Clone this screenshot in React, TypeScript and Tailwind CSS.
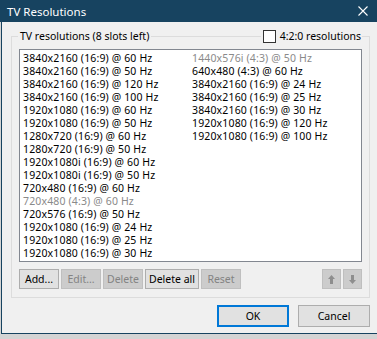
import React from "react";

type Item = { label: string; dim?: boolean };

const items: Item[] = [
  { label: "3840x2160 (16:9) @ 60 Hz" },
  { label: "3840x2160 (16:9) @ 50 Hz" },
  { label: "3840x2160 (16:9) @ 120 Hz" },
  { label: "3840x2160 (16:9) @ 100 Hz" },
  { label: "1920x1080 (16:9) @ 60 Hz" },
  { label: "1920x1080 (16:9) @ 50 Hz" },
  { label: "1280x720 (16:9) @ 60 Hz" },
  { label: "1280x720 (16:9) @ 50 Hz" },
  { label: "1920x1080i (16:9) @ 60 Hz" },
  { label: "1920x1080i (16:9) @ 50 Hz" },
  { label: "720x480 (16:9) @ 60 Hz" },
  { label: "720x480 (4:3) @ 60 Hz", dim: true },
  { label: "720x576 (16:9) @ 50 Hz" },
  { label: "1920x1080 (16:9) @ 24 Hz" },
  { label: "1920x1080 (16:9) @ 25 Hz" },
  { label: "1920x1080 (16:9) @ 30 Hz" },
  // second column
  { label: "1440x576i (4:3) @ 50 Hz", dim: true },
  { label: "640x480 (4:3) @ 60 Hz" },
  { label: "3840x2160 (16:9) @ 24 Hz" },
  { label: "3840x2160 (16:9) @ 25 Hz" },
  { label: "3840x2160 (16:9) @ 30 Hz" },
  { label: "1920x1080 (16:9) @ 120 Hz" },
  { label: "1920x1080 (16:9) @ 100 Hz" },
];

const Btn: React.FC<{ label?: string; disabled?: boolean; className?: string; children?: React.ReactNode }> = ({
  label,
  disabled,
  className = "",
  children,
}) => (
  <div
    className={`h-[20px] flex items-center justify-center border ${
      disabled ? "bg-[#cccccc] border-[#bfbfbf] text-[#838383]" : "bg-[#e1e1e1] border-[#adadad] text-black"
    } ${className}`}
  >
    {label}
    {children}
  </div>
);

const Arrow: React.FC<{ down?: boolean }> = ({ down }) => (
  <svg width="7" height="9" viewBox="0 0 7 9" className={down ? "rotate-180" : ""}>
    <path d="M3.5 0 L7 4 L5 4 L5 9 L2 9 L2 4 L0 4 Z" fill="#8e8e8e" />
  </svg>
);

export default function App() {
  return (
    <div
      className="w-[377px] h-[339px] bg-[#d4d4d4] overflow-hidden text-[10.5px] leading-[13px] text-black"
      style={{ fontFamily: '"Segoe UI", "Noto Sans", sans-serif' }}
    >
      <div className="h-[334px] flex flex-col">
        {/* Title bar */}
        <div className="h-[22px] bg-[#174360] flex items-center pl-[7px] text-white text-[11.5px]">
          <span>TV Resolutions</span>
          <svg width="10" height="10" viewBox="0 0 10 10" className="ml-auto mr-[9px]">
            <path d="M0.5 0.5 L9.5 9.5 M9.5 0.5 L0.5 9.5" stroke="#ffffff" strokeWidth="1.1" />
          </svg>
        </div>

        <div className="flex-1 ml-[1px] border-l border-b border-[#174360] bg-[#f0f0f0] flex flex-col pl-[9px] pr-[7px]">
          {/* Group header */}
          <div className="mt-[7px] h-[14px] flex items-center">
            <div className="w-[7px] h-[7px] self-end border-l border-t border-[#dcdcdc]" />
            <div className="px-[2px] whitespace-nowrap">TV resolutions (8 slots left)</div>
            <div className="flex-1 h-[7px] self-end border-t border-[#dcdcdc]" />
            <div className="pl-[2px] pr-[1px] flex items-center">
              <div className="w-[13px] h-[13px] shrink-0 bg-white border border-[#333333]" />
              <span className="ml-[4px] whitespace-nowrap">4:2:0 resolutions</span>
            </div>
            <div className="w-[8px] h-[7px] self-end border-r border-t border-[#dcdcdc]" />
          </div>

          {/* Group body */}
          <div className="border-l border-r border-b border-[#dcdcdc] pt-[6px] px-[7px] pb-[8px]">
            <div className="h-[213px] bg-white border border-[#828790] pl-[3px] pt-[2px] overflow-hidden">
              <div className="grid grid-flow-col grid-cols-[169px_169px] grid-rows-[repeat(16,13px)] tracking-[0.15px]">
                {items.map((it, i) => (
                  <div key={i} className={`whitespace-nowrap ${it.dim ? "text-[#8a8a8a]" : ""}`}>
                    {it.label}
                  </div>
                ))}
              </div>
            </div>

            <div className="mt-[7px] flex gap-[2px]">
              <Btn label="Add..." className="w-[40px]" />
              <Btn label="Edit..." disabled className="w-[40px]" />
              <Btn label="Delete" disabled className="w-[40px]" />
              <Btn label="Delete all" className="w-[54px]" />
              <Btn label="Reset" disabled className="w-[40px]" />
              <div className="flex-1" />
              <Btn disabled className="w-[19px]">
                <Arrow />
              </Btn>
              <Btn disabled className="w-[19px]">
                <Arrow down />
              </Btn>
            </div>
          </div>

          {/* Dialog buttons */}
          <div className="mt-[7px] flex justify-end gap-[9px]">
            <div className="w-[72px] h-[22px] flex items-center justify-center bg-[#e1e1e1] border-2 border-[#0078d7]">
              OK
            </div>
            <div className="w-[72px] h-[22px] flex items-center justify-center bg-[#e1e1e1] border border-[#adadad]">
              Cancel
            </div>
          </div>
        </div>
      </div>
    </div>
  );
}
